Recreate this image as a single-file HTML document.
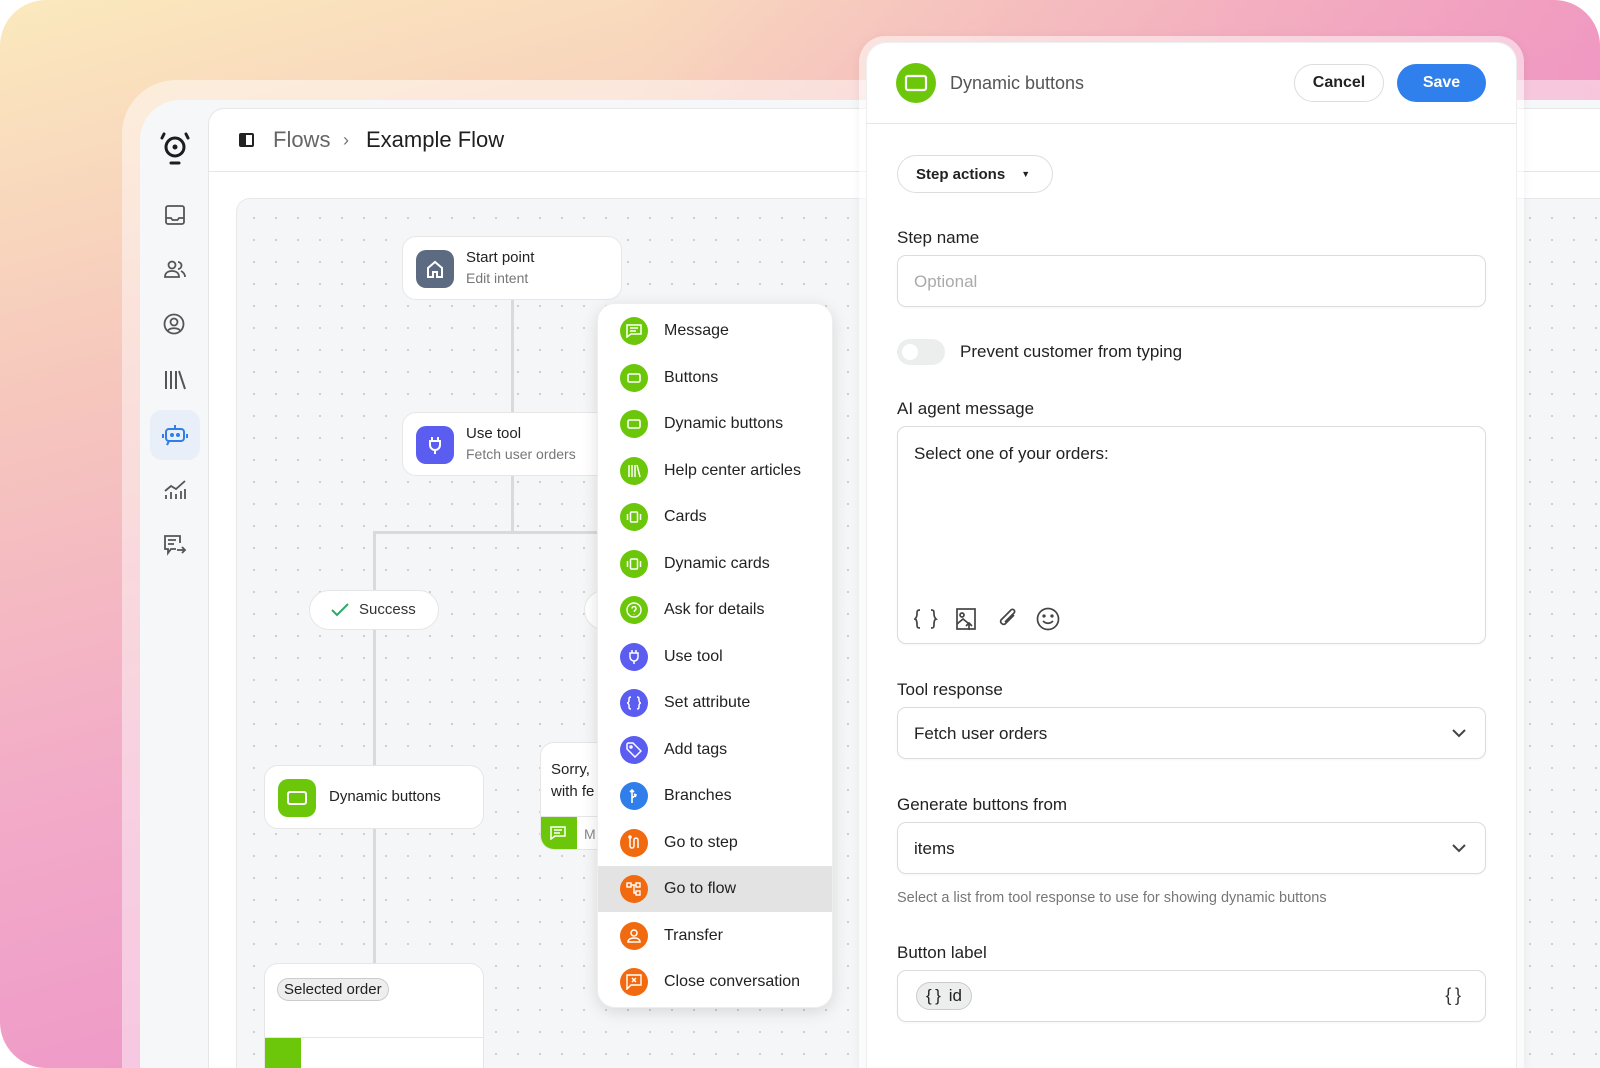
<!DOCTYPE html>
<html><head><meta charset="utf-8"><style>
*{box-sizing:border-box;margin:0;padding:0}
html,body{width:1600px;height:1068px;overflow:hidden;background:#fff}
body{font-family:"Liberation Sans",sans-serif;color:#222}
#w{position:relative;width:1600px;height:1068px;overflow:hidden}
.abs{position:absolute}
.bg{left:0;top:0;width:1600px;height:1068px;border-radius:46px;background:linear-gradient(165deg,#fbe9bd 0%,#f6c6bd 28%,#f2aac8 55%,#ea86c8 100%);overflow:hidden}
.bg2{left:0;top:0;width:1600px;height:1068px;background:linear-gradient(90deg,rgba(0,0,0,0) 40%,rgba(236,120,196,.55) 100%)}
.frame{left:122px;top:80px;width:1478px;height:988px;border-radius:54px 0 0 0;background:rgba(255,255,255,.45)}
.app{left:140px;top:100px;width:1460px;height:968px;border-radius:40px 0 0 0;background:#f6f7f8;overflow:hidden}
.main{left:208px;top:108px;width:1392px;height:960px;background:#fff;border-top-left-radius:16px;border-top:1px solid #e6e6e6;border-left:1px solid #e6e6e6}
.hdrline{left:208px;top:171px;width:1392px;height:1px;background:#e6e6e6}
.canvas{left:236px;top:198px;width:1364px;height:870px;border-radius:14px 0 0 0;border-top:1px solid #e8e8e8;border-left:1px solid #e8e8e8;background-color:#f5f6f7;background-image:radial-gradient(circle,#c9cbcf 0.9px,transparent 1.3px);background-size:22px 22px;background-position:6px 8px}
.node{background:#fff;border:1px solid #e6e6e6;border-radius:14px}
.ico{border-radius:10px;display:flex;align-items:center;justify-content:center}
.t1{font-size:15px;color:#222}
.t2{font-size:14px;color:#777}
.vl{background:#d9dadc;width:3px}
.hl{background:#d9dadc;height:3px}
.menu{left:597px;top:303px;width:236px;height:705px;border-radius:18px;background:#fff;box-shadow:0 4px 16px rgba(0,0,0,.12);border:1px solid #eee;overflow:hidden}
.mi{position:absolute;left:0;width:236px;height:46px;display:flex;align-items:center}
.mi .c{width:28px;height:28px;border-radius:14px;margin-left:22px;display:flex;align-items:center;justify-content:center}
.mi span{margin-left:16px;font-size:16px;color:#222}
.g{background:#6cc70b}.p{background:#5b5cf0}.b{background:#2f7ee9}.o{background:#f26a10}
.pout{left:859px;top:36px;width:665px;height:1032px;border-radius:26px 26px 0 0;background:rgba(255,255,255,.5);box-shadow:0 2px 10px rgba(0,0,0,.06)}
.panel{left:866px;top:42px;width:651px;height:1026px;border-radius:20px 20px 0 0;background:#fff;border:1px solid #eee;border-bottom:none}
.lbl{font-size:17px;color:#222;left:897px}
.inp{left:897px;width:589px;border:1px solid #dcdcdc;border-radius:9px;background:#fff;box-shadow:0 1px 2px rgba(0,0,0,.04)}
.inp .v{position:absolute;left:16px;font-size:17px;color:#222}
.chev{position:absolute;right:18px;top:18px}
svg{display:block}
</style></head><body><div id="w">
<div class="abs bg"><div class="abs bg2"></div></div>
<div class="abs frame"></div>
<div class="abs app"></div>
<div class="abs main"></div>
<div class="abs hdrline"></div>

<div class="abs" style="left:155px;top:126px"><svg width="40" height="40" viewBox="0 0 40 40" fill="none" stroke="#1d1d1f" stroke-width="3" stroke-linecap="round"><circle cx="20" cy="21" r="9"/><circle cx="20" cy="21" r="2.5" fill="#1d1d1f" stroke="none"/><path d="M9 8 L7 12 M31 8 L33 12 M16 37 L24 37"/></svg></div>
<div class="abs" style="left:164px;top:204px"><svg width="22" height="22" viewBox="0 0 22 22" fill="none" stroke="#555" stroke-width="1.8"><rect x="2" y="2" width="18" height="18" rx="2"/><path d="M2 14h5l1.5 2h5l1.5-2h5"/></svg></div>
<div class="abs" style="left:163px;top:259px"><svg width="24" height="20" viewBox="0 0 24 20" fill="none" stroke="#555" stroke-width="1.8"><circle cx="9" cy="6" r="3.5"/><path d="M2 18c0-4 3-6 7-6s7 2 7 6z"/><path d="M15 3a3.5 3.5 0 0 1 0 7M18 12c2 1 4 3 4 6"/></svg></div>
<div class="abs" style="left:163px;top:313px"><svg width="22" height="22" viewBox="0 0 22 22" fill="none" stroke="#555" stroke-width="1.8"><circle cx="11" cy="11" r="9.5"/><circle cx="11" cy="9" r="3.5"/><path d="M5 17.5c2-3 10-3 12 0"/></svg></div>
<div class="abs" style="left:164px;top:369px"><svg width="22" height="22" viewBox="0 0 22 22" fill="none" stroke="#555" stroke-width="2"><path d="M2 2v18M7 2v18M12 2v18M15 2l6 18"/></svg></div>
<div class="abs" style="left:150px;top:410px;width:50px;height:50px;border-radius:12px;background:#e8eff9"></div>
<div class="abs" style="left:162px;top:423px"><svg width="26" height="24" viewBox="0 0 26 24" fill="none" stroke="#2f7ee9" stroke-width="2"><path d="M13 2v4"/><rect x="4" y="6" width="18" height="12" rx="3"/><path d="M7 18l-2 4"/><path d="M1 11v4M25 11v4"/><circle cx="10" cy="12" r="1" fill="#2f7ee9"/><circle cx="16" cy="12" r="1" fill="#2f7ee9"/></svg></div>
<div class="abs" style="left:163px;top:479px"><svg width="24" height="22" viewBox="0 0 24 22" fill="none" stroke="#555" stroke-width="1.8"><path d="M2 12l6-5 5 3 9-8"/><path d="M3 20v-4M8 20v-7M13 20v-5M18 20v-8M22 20v-10"/></svg></div>
<div class="abs" style="left:163px;top:534px"><svg width="24" height="22" viewBox="0 0 24 22" fill="none" stroke="#555" stroke-width="1.8"><path d="M17 9V2H2v13h3v4l3-4h5"/><path d="M5 6h8M5 10h6"/><path d="M14 16h8M19 13l3 3-3 3"/></svg></div>

<div class="abs" style="left:239px;top:133px;width:15px;height:14px;border:2px solid #222;border-radius:2px"><div style="width:5px;height:10px;background:#222"></div></div>
<div class="abs" style="left:273px;top:127px;font-size:22px;color:#666">Flows</div>
<div class="abs" style="left:343px;top:130px;font-size:18px;color:#777">›</div>
<div class="abs" style="left:366px;top:127px;font-size:22px;color:#1f1f1f">Example Flow</div>

<div class="abs canvas"></div>

<div class="abs vl" style="left:511px;top:300px;height:112px"></div>
<div class="abs vl" style="left:511px;top:476px;height:58px"></div>
<div class="abs hl" style="left:373px;top:531px;width:230px;border-top-left-radius:6px"></div>
<div class="abs vl" style="left:373px;top:531px;height:60px"></div>
<div class="abs vl" style="left:373px;top:630px;height:136px"></div>
<div class="abs vl" style="left:373px;top:829px;height:134px"></div>

<div class="abs node" style="left:402px;top:236px;width:220px;height:64px"></div>
<div class="abs ico" style="left:416px;top:250px;width:38px;height:38px;background:#5d6b82"><svg width="20" height="20" viewBox="0 0 20 20" fill="none" stroke="#fff" stroke-width="2"><path d="M3 9l7-6 7 6v9h-5v-5h-4v5H3z"/></svg></div>
<div class="abs t1" style="left:466px;top:249px">Start point</div>
<div class="abs t2" style="left:466px;top:270px">Edit intent</div>

<div class="abs node" style="left:402px;top:412px;width:210px;height:64px"></div>
<div class="abs ico" style="left:416px;top:426px;width:38px;height:38px;background:#5b5cf0"><svg width="20" height="20" viewBox="0 0 20 20" fill="none" stroke="#fff" stroke-width="2"><path d="M7 2v4M13 2v4M5 6h10v4a5 5 0 0 1-10 0z M10 15v4"/></svg></div>
<div class="abs t1" style="left:466px;top:425px">Use tool</div>
<div class="abs t2" style="left:466px;top:446px">Fetch user orders</div>

<div class="abs node" style="left:309px;top:590px;width:130px;height:40px;border-radius:20px"></div>
<div class="abs" style="left:331px;top:602px"><svg width="18" height="16" viewBox="0 0 18 16" fill="none" stroke="#2ea86a" stroke-width="2"><path d="M1 8l5 5L17 2"/></svg></div>
<div class="abs" style="left:359px;top:601px;font-size:15px;color:#333">Success</div>
<div class="abs node" style="left:584px;top:590px;width:40px;height:40px;border-radius:20px"></div>

<div class="abs node" style="left:264px;top:765px;width:220px;height:64px"></div>
<div class="abs ico" style="left:278px;top:779px;width:38px;height:38px;background:#6cc70b"><svg width="22" height="16" viewBox="0 0 22 16" fill="none" stroke="#fff" stroke-width="2"><rect x="2" y="2" width="18" height="12" rx="2"/></svg></div>
<div class="abs t1" style="left:329px;top:788px">Dynamic buttons</div>

<div class="abs node" style="left:264px;top:963px;width:220px;height:105px;overflow:hidden;border-bottom:none;border-radius:14px 14px 0 0"><div style="position:absolute;left:0;top:73px;width:220px;height:1px;background:#e6e6e6"></div><div style="position:absolute;left:0;top:74px;width:36px;height:40px;background:#6cc70b"></div></div>
<div class="abs" style="left:277px;top:978px;padding:2px 6px;border:1px solid #ccc;border-radius:12px;background:#eee;font-size:15px;color:#222">Selected order</div>

<div class="abs node" style="left:540px;top:742px;width:80px;height:108px;overflow:hidden"><div style="position:absolute;left:0;top:73px;width:36px;height:40px;background:#6cc70b"></div><div style="position:absolute;left:0;top:73px;width:80px;height:1px;background:#e6e6e6"></div></div>
<div class="abs" style="left:551px;top:759px;font-size:15px;line-height:22px;color:#222">Sorry,<br>with fe</div>
<div class="abs" style="left:550px;top:826px"><svg width="16" height="14" viewBox="0 0 16 14" fill="none" stroke="#fff" stroke-width="1.5"><path d="M1 1h14v9H5l-4 3z M4 4h8M4 7h6"/></svg></div>
<div class="abs" style="left:584px;top:826px;font-size:14px;color:#888">M</div>

<div class="abs menu">
<div class="mi" style="top:4px"><div class="c g"><svg width="16" height="14" viewBox="0 0 16 14" fill="none" stroke="#fff" stroke-width="1.5"><path d="M1 1h14v9H5l-4 3z M4 4h8M4 7h6"/></svg></div><span>Message</span></div>
<div class="mi" style="top:51px"><div class="c g"><svg width="14" height="10" viewBox="0 0 14 10" fill="none" stroke="#fff" stroke-width="1.6"><rect x="1" y="1" width="12" height="8" rx="1.5"/></svg></div><span>Buttons</span></div>
<div class="mi" style="top:97px"><div class="c g"><svg width="14" height="10" viewBox="0 0 14 10" fill="none" stroke="#fff" stroke-width="1.6"><rect x="1" y="1" width="12" height="8" rx="1.5"/></svg></div><span>Dynamic buttons</span></div>
<div class="mi" style="top:144px"><div class="c g"><svg width="14" height="14" viewBox="0 0 14 14" fill="none" stroke="#fff" stroke-width="1.5"><path d="M2 1v12M5 1v12M8 1v12M10 1l3 12"/></svg></div><span>Help center articles</span></div>
<div class="mi" style="top:190px"><div class="c g"><svg width="16" height="12" viewBox="0 0 16 12" fill="none" stroke="#fff" stroke-width="1.5"><rect x="4.5" y="1" width="7" height="10" rx="1"/><path d="M1.5 3v6M14.5 3v6"/></svg></div><span>Cards</span></div>
<div class="mi" style="top:237px"><div class="c g"><svg width="16" height="12" viewBox="0 0 16 12" fill="none" stroke="#fff" stroke-width="1.5"><rect x="4.5" y="1" width="7" height="10" rx="1"/><path d="M1.5 3v6M14.5 3v6"/></svg></div><span>Dynamic cards</span></div>
<div class="mi" style="top:283px"><div class="c g"><svg width="16" height="16" viewBox="0 0 16 16" fill="none" stroke="#fff" stroke-width="1.4"><circle cx="8" cy="8" r="7"/><path d="M6 6.5a2 2 0 1 1 2.5 2v1.5M8 12v.5"/></svg></div><span>Ask for details</span></div>
<div class="mi" style="top:330px"><div class="c p"><svg width="14" height="16" viewBox="0 0 14 16" fill="none" stroke="#fff" stroke-width="1.5"><path d="M5 1v3M9 1v3M3 4h8v4a4 4 0 0 1-8 0z M7 12v3"/></svg></div><span>Use tool</span></div>
<div class="mi" style="top:376px"><div class="c p"><svg width="16" height="14" viewBox="0 0 16 14" fill="none" stroke="#fff" stroke-width="1.5"><path d="M5 1C3 1 3 2 3 4s-1 3-2 3c1 0 2 1 2 3s0 3 2 3M11 1c2 0 2 1 2 3s1 3 2 3c-1 0-2 1-2 3s0 3-2 3"/></svg></div><span>Set attribute</span></div>
<div class="mi" style="top:423px"><div class="c p"><svg width="16" height="16" viewBox="0 0 16 16" fill="none" stroke="#fff" stroke-width="1.5"><path d="M1 2v5l8 8 6-6-8-8H2z"/><circle cx="5" cy="5" r="1"/></svg></div><span>Add tags</span></div>
<div class="mi" style="top:469px"><div class="c b"><svg width="14" height="16" viewBox="0 0 14 16" fill="none" stroke="#fff" stroke-width="1.6"><path d="M5 15V2M3 4l2-2 2 2M5 10l4-3M7 6l2 1-1 2"/></svg></div><span>Branches</span></div>
<div class="mi" style="top:516px"><div class="c o"><svg width="14" height="16" viewBox="0 0 14 16" fill="none" stroke="#fff" stroke-width="1.5"><path d="M3 3v8a2 2 0 0 0 4 0V5a2 2 0 0 1 4 0v8"/><circle cx="3" cy="2" r="1"/></svg></div><span>Go to step</span></div>
<div class="mi" style="top:562px;background:#e3e3e3"><div class="c o"><svg width="16" height="16" viewBox="0 0 16 16" fill="none" stroke="#fff" stroke-width="1.4"><rect x="1" y="2" width="4" height="4"/><rect x="10" y="2" width="4" height="4"/><rect x="10" y="10" width="4" height="4"/><path d="M5 4h5M8 4v8h2"/></svg></div><span>Go to flow</span></div>
<div class="mi" style="top:609px"><div class="c o"><svg width="14" height="16" viewBox="0 0 14 16" fill="none" stroke="#fff" stroke-width="1.5"><circle cx="7" cy="5" r="3"/><path d="M1 14c0-3 3-4 6-4s6 1 6 4z"/></svg></div><span>Transfer</span></div>
<div class="mi" style="top:655px"><div class="c o"><svg width="16" height="16" viewBox="0 0 16 16" fill="none" stroke="#fff" stroke-width="1.4"><path d="M1 1h14v10H5l-4 4z M6 4l4 4M10 4l-4 4"/></svg></div><span>Close conversation</span></div>
</div>

<div class="abs pout"></div>
<div class="abs panel"></div>
<div class="abs" style="left:896px;top:63px;width:40px;height:40px;border-radius:20px;background:#6cc70b;display:flex;align-items:center;justify-content:center"><svg width="24" height="18" viewBox="0 0 24 18" fill="none" stroke="#fff" stroke-width="2.2"><rect x="2" y="2" width="20" height="14" rx="2"/></svg></div>
<div class="abs" style="left:950px;top:73px;font-size:18px;color:#555">Dynamic buttons</div>
<div class="abs" style="left:1294px;top:64px;width:90px;height:38px;border:1px solid #ddd;border-radius:19px;font-size:16px;font-weight:bold;color:#222;display:flex;align-items:center;justify-content:center">Cancel</div>
<div class="abs" style="left:1397px;top:64px;width:89px;height:38px;border-radius:19px;background:#2f80ed;font-size:16px;font-weight:bold;color:#fff;display:flex;align-items:center;justify-content:center">Save</div>
<div class="abs" style="left:866px;top:123px;width:651px;height:1px;background:#e6e6e6"></div>

<div class="abs" style="left:897px;top:155px;width:156px;height:38px;border:1px solid #ddd;border-radius:19px;font-size:15px;font-weight:bold;color:#222;display:flex;align-items:center;padding-left:18px">Step actions<span style="margin-left:16px;font-size:9px">▼</span></div>

<div class="abs lbl" style="top:228px">Step name</div>
<div class="abs inp" style="top:255px;height:52px"><div class="v" style="top:16px;color:#aaa">Optional</div></div>

<div class="abs" style="left:897px;top:339px;width:48px;height:26px;border-radius:13px;background:#eceded"><div style="position:absolute;left:5px;top:5px;width:16px;height:16px;border-radius:8px;background:#fff"></div></div>
<div class="abs" style="left:960px;top:342px;font-size:17px;color:#222">Prevent customer from typing</div>

<div class="abs lbl" style="top:399px">AI agent message</div>
<div class="abs inp" style="top:426px;height:218px"><div class="v" style="top:17px">Select one of your orders:</div></div>
<div class="abs" style="left:914px;top:606px"><svg width="150" height="26" viewBox="0 0 150 26" fill="none" stroke="#444" stroke-width="1.7"><path d="M6 4C3 4 3 5 3 8s-1 4-2 5c1 0 2 2 2 5s0 4 3 4M17 4c3 0 3 1 3 4s1 4 2 5c-1 0-2 2-2 5s0 4-3 4"/><rect x="43" y="3" width="18" height="20"/><circle cx="48" cy="9" r="2"/><path d="M43 18l6-5 5 4M55 24v-6M52 20l3-3 3 3"/><path d="M100 9l-9 9a3 3 0 0 1-4-4l10-10a2 2 0 0 1 3 3l-9 9"/><circle cx="134" cy="13" r="10.5"/><circle cx="130" cy="10" r="0.8" fill="#444"/><circle cx="138" cy="10" r="0.8" fill="#444"/><path d="M129 15c3 3 7 3 10 0"/></svg></div>

<div class="abs lbl" style="top:680px">Tool response</div>
<div class="abs inp" style="top:707px;height:52px"><div class="v" style="top:16px">Fetch user orders</div><svg class="chev" width="16" height="14" viewBox="0 0 16 14" fill="none" stroke="#444" stroke-width="2"><path d="M2 4l6 6 6-6"/></svg></div>

<div class="abs lbl" style="top:795px">Generate buttons from</div>
<div class="abs inp" style="top:822px;height:52px"><div class="v" style="top:16px">items</div><svg class="chev" width="16" height="14" viewBox="0 0 16 14" fill="none" stroke="#444" stroke-width="2"><path d="M2 4l6 6 6-6"/></svg></div>
<div class="abs" style="left:897px;top:890px;font-size:14.5px;color:#777">Select a list from tool response to use for showing dynamic buttons</div>

<div class="abs lbl" style="top:943px">Button label</div>
<div class="abs inp" style="top:970px;height:52px"><div style="position:absolute;left:18px;top:11px;height:28px;padding:0 9px;border:1px solid #ccc;border-radius:14px;background:#eceded;font-size:17px;color:#222;display:flex;align-items:center">{&thinsp;} <span style="margin-left:8px">id</span></div><div style="position:absolute;right:24px;top:14px;font-size:18px;color:#333">{&thinsp;}</div></div>
</div></body></html>
